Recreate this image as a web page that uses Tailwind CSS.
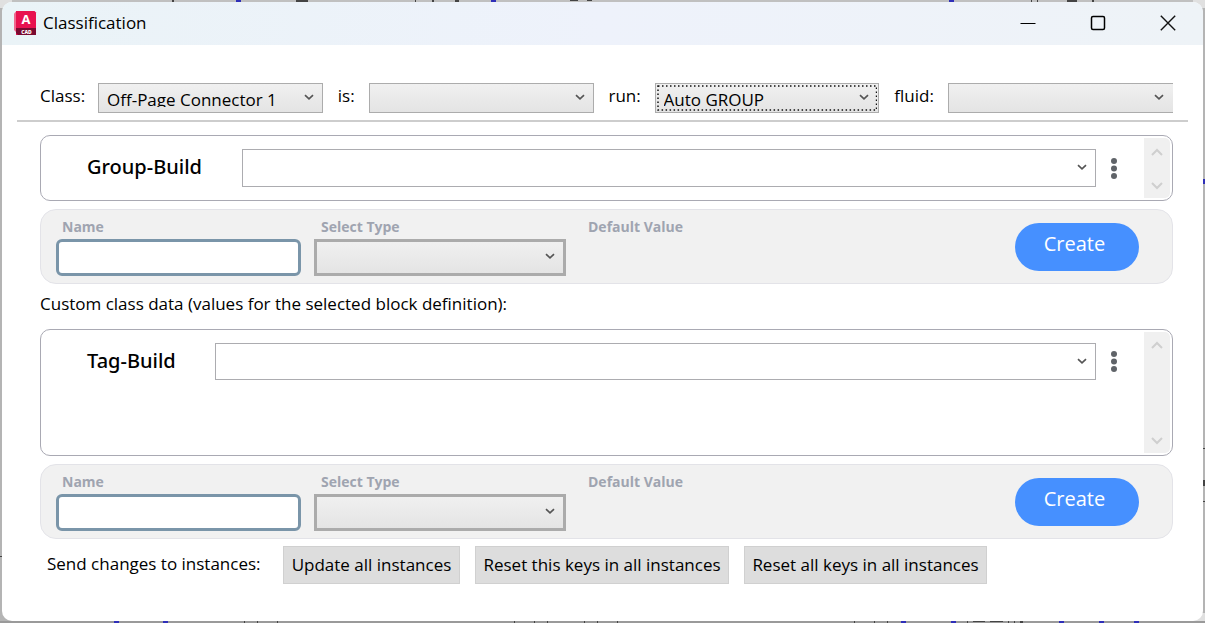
<!DOCTYPE html>
<html lang="en">
<head>
<meta charset="utf-8">
<meta name="viewport" content="width=device-width, initial-scale=1">
<title>Classification</title>
<script src="https://cdn.jsdelivr.net/npm/@tailwindcss/browser@4"></script>
</head>
<body class="relative min-h-screen flex flex-col bg-[#b4b4b4] p-[2px] text-[17px] leading-6 text-black font-['Open_Sans','Noto_Sans',sans-serif]">

<!-- canvas behind the dialog -->
<svg class="absolute inset-0 w-full h-full" aria-hidden="true">
  <path d="M0 0h1205v2H0z" fill="#c0c0c0"/><path d="M0 0h12v8H0zM1193 0h12v8h-12zM1193 613h12v10h-12z" fill="#e0e0e0"/>
  <path d="M0 621h1205v2H0z" fill="#9a9a9a"/>
  <path d="M236 0h5v2h-5zM491 0h5v2h-5zM949 0h5v2h-5zM1202 179h3v5h-3zM114 621h5v2h-5zM163 621h5v2h-5zM901 621h5v2h-5zM951 621h5v2h-5zM1059 621h5v2h-5zM1099 621h5v2h-5zM1134 621h5v2h-5z" fill="#2f2fb8"/>
  <path d="M296 0h12v2h-12zM1067 0h10v2h-10zM1092 0h2v2h-2zM1031 0h1v2h-1zM1037 0h1v2h-1zM172 0h2v2h-2zM415 0h1v2h-1zM432 0h2v2h-2zM455 0h4v2h-4zM570 0h8v1h-8zM587 0h5v1h-5zM244 621h1v2h-1zM257 621h1v2h-1zM277 621h1v2h-1zM514 621h1v2h-1zM534 621h1v2h-1zM547 621h1v2h-1zM584 621h1v2h-1zM597 621h1v2h-1zM617 621h1v2h-1zM854 621h1v2h-1zM874 621h1v2h-1zM887 621h1v2h-1zM967 621h1v2h-1zM973 621h12v1h-12zM990 621h13v1h-13zM1008 621h1v2h-1zM1014 621h1v2h-1zM1020 621h3v2h-3zM0 556h2v1h-2zM1203 448h2v1h-2zM1203 480h2v6h-2zM1203 501h2v1h-2z" fill="#444"/>
</svg>

<!-- shared icons -->
<svg class="hidden" aria-hidden="true">
  <symbol id="chevron" viewBox="0 0 10 7"><path d="M1 1.2 5 4.8 9 1.2" fill="none" stroke="#555" stroke-width="1.7"/></symbol>
  <symbol id="up" viewBox="0 0 12 9"><path d="M1 7 6 2 11 7" fill="none" stroke="#cfcfcf" stroke-width="2"/></symbol>
  <symbol id="down" viewBox="0 0 12 9"><path d="M1 2 6 7 11 2" fill="none" stroke="#cfcfcf" stroke-width="2"/></symbol>
  <symbol id="dots" viewBox="0 0 6 22"><g fill="#5f6368"><circle cx="3" cy="3" r="3"/><circle cx="3" cy="10.5" r="3"/><circle cx="3" cy="18" r="3"/></g></symbol>
</svg>

<div class="relative flex-1 flex flex-col rounded-[10px] bg-white overflow-hidden">
  <header class="h-[43px] flex items-center bg-linear-to-r from-[#eaf3f7] via-[#eef2fb] to-[#eef3f7] pl-3 pr-[27px] pb-[2px]">
    <svg class="w-6 h-6 mr-1" viewBox="0 0 24 24" aria-hidden="true">
      <path d="M0 2.5 2.5 0v21.500L0 19z" fill="#f0698f"/>
      <path d="M2 0h18.500L22 1.500V24H2z" fill="#e8114f"/>
      <path d="M2 17h20v7H4l-2-2z" fill="#7a0a30"/>
      <text x="12" y="13" text-anchor="middle" font-size="13" font-weight="700" fill="#fff">A</text>
      <text x="12.500" y="22.500" text-anchor="middle" font-size="5" font-weight="800" fill="#fff">CAD</text>
    </svg>
    <h1 class="flex-1 pl-px">Classification</h1>
    <div class="flex items-center gap-[54px]">
      <button aria-label="Minimize"><svg class="block w-4 h-4" viewBox="0 0 16 16"><path d="M.5 8.500h15" stroke="#000" stroke-width="1.200"/></svg></button>
      <button aria-label="Maximize"><svg class="block w-4 h-4" viewBox="0 0 16 16"><rect x="1.500" y="1.500" width="13" height="13" rx="1.500" fill="none" stroke="#000" stroke-width="1.500"/></svg></button>
      <button aria-label="Close"><svg class="block w-4 h-4" viewBox="0 0 16 16"><path d="m.8.8 14.400 14.400M15.200.8.8 15.200" stroke="#111" stroke-width="1.400"/></svg></button>
    </div>
  </header>

  <main class="flex-1 flex flex-col pl-[38px] pr-[30px] pt-[38px]">
    <div class="-ml-[23px] -mr-[15px] pl-[23px] pr-[15px] pb-[7px] flex items-center border-b-2 border-[#cdcdcd]">
      <label for="class" class="w-[58px] pb-1">Class:</label>
      <div class="relative flex-1">
        <select id="class" class="block appearance-none w-full h-[30px] border border-[#acacac] bg-linear-to-b from-[#f0f0f0] to-[#e4e4e4] pl-2 pt-2 pb-[5px] leading-[15px]"><option>Off-Page Connector 1</option></select>
        <svg class="absolute right-[9px] top-[11px] w-[10px] h-[7px] pointer-events-none"><use href="#chevron"/></svg>
      </div>
      <label for="is" class="w-[46px] pl-[15px] pb-1">is:</label>
      <div class="relative flex-1">
        <select id="is" class="block appearance-none w-full h-[30px] border border-[#acacac] bg-linear-to-b from-[#f0f0f0] to-[#e4e4e4] pl-2"><option></option></select>
        <svg class="absolute right-[9px] top-[11px] w-[10px] h-[7px] pointer-events-none"><use href="#chevron"/></svg>
      </div>
      <label for="run" class="w-[61px] pl-[15px] pb-1">run:</label>
      <div class="relative flex-1">
        <select id="run" class="block appearance-none w-full h-[30px] border border-[#acacac] bg-linear-to-b from-[#f0f0f0] to-[#e4e4e4] pl-2 pt-2 pb-[5px] leading-[15px]"><option>Auto GROUP</option></select>
        <svg class="absolute inset-[2px] w-[calc(100%-4px)] h-[26px] pointer-events-none" aria-hidden="true"><rect x="1" y="1" width="99%" height="24" fill="none" stroke="#111" stroke-width="1.500" stroke-dasharray="1.500 2.500"/></svg>
        <svg class="absolute right-[10px] top-[11px] w-[10px] h-[7px] pointer-events-none"><use href="#chevron"/></svg>
      </div>
      <label for="fluid" class="w-[69px] pl-[15px] pb-1">fluid:</label>
      <div class="relative flex-1">
        <select id="fluid" class="block appearance-none w-full h-[30px] border border-r-0 border-[#acacac] bg-linear-to-b from-[#f0f0f0] to-[#e4e4e4] pl-2"><option></option></select>
        <svg class="absolute right-[9px] top-[11px] w-[10px] h-[7px] pointer-events-none"><use href="#chevron"/></svg>
      </div>
    </div>

    <section class="mt-[13px] h-[66px] flex rounded-[10px] border border-[#a9a9b3] p-[2px]">
      <div class="flex-1 flex items-start pl-11 pt-[11px]">
        <label for="group" class="w-[155px] pt-[6px] text-[20px] font-medium font-['Noto_Sans','Open_Sans',sans-serif]">Group-Build</label>
        <div class="relative flex-1">
          <select id="group" class="block appearance-none w-full h-[38px] border border-[#acacb0] bg-white pl-2"><option></option></select>
          <svg class="absolute right-[9px] top-[15px] w-[10px] h-[7px] pointer-events-none"><use href="#chevron"/></svg>
        </div>
        <button aria-label="Group-Build options" class="ml-[15px] mr-[27px] pt-[9px]"><svg class="block w-[6px] h-[22px]"><use href="#dots"/></svg></button>
      </div>
      <div class="w-[26px] flex flex-col items-center justify-between bg-[#f0f0f0] pt-[10px] pb-2 rounded-r-[5px]">
        <button aria-label="Scroll up"><svg class="block w-3 h-[9px]"><use href="#up"/></svg></button>
        <button aria-label="Scroll down"><svg class="block w-3 h-[9px]"><use href="#down"/></svg></button>
      </div>
    </section>

    <form class="mt-2 h-[75px] flex items-start rounded-[16px] border border-[#e3e3e8] bg-[#f1f1f1] pl-[15px] pr-[33px]">
      <div class="w-[245px] mr-[13px]">
        <label for="n1" class="block h-[29px] pl-[6px] pt-[5px] text-[14px] font-bold text-[#9fa4b0]">Name</label>
        <input id="n1" type="text" class="block w-full h-[37px] rounded-[6px] border-3 border-[#7a95a9] bg-white px-2">
      </div>
      <div class="w-[252px] mr-[22px]">
        <label for="t1" class="block h-[29px] pl-[7px] pt-[5px] text-[14px] font-bold text-[#9fa4b0]">Select Type</label>
        <div class="relative">
          <select id="t1" class="block appearance-none w-full h-[37px] border-3 border-[#ababab] bg-linear-to-b from-[#f0f0f0] to-[#e4e4e4] pl-2"><option></option></select>
          <svg class="absolute right-[11px] top-[14px] w-[10px] h-[7px] pointer-events-none"><use href="#chevron"/></svg>
        </div>
      </div>
      <span class="flex-1 pt-[5px] text-[14px] font-bold text-[#9fa4b0]">Default Value</span>
      <button type="button" class="mt-[13px] w-[124px] h-12 rounded-full bg-[#4690ff] pr-[5px] pb-[6px] text-[20px] text-white">Create</button>
    </form>

    <h2 class="mt-2">Custom class data (values for the selected block definition):</h2>

    <section class="mt-[13px] h-[127px] flex rounded-[10px] border border-[#a9a9b3] p-[2px]">
      <div class="flex-1 flex items-start pl-11 pt-[11px]">
        <label for="tag" class="w-[128px] pt-[6px] text-[20px] font-medium font-['Noto_Sans','Open_Sans',sans-serif]">Tag-Build</label>
        <div class="relative flex-1">
          <select id="tag" class="block appearance-none w-full h-[37px] border border-[#acacb0] bg-white pl-2"><option></option></select>
          <svg class="absolute right-[9px] top-[15px] w-[10px] h-[7px] pointer-events-none"><use href="#chevron"/></svg>
        </div>
        <button aria-label="Tag-Build options" class="ml-[15px] mr-[27px] pt-2"><svg class="block w-[6px] h-[22px]"><use href="#dots"/></svg></button>
      </div>
      <div class="w-[26px] flex flex-col items-center justify-between bg-[#f0f0f0] pt-[9px] pb-2 rounded-r-[5px]">
        <button aria-label="Scroll up"><svg class="block w-3 h-[9px]"><use href="#up"/></svg></button>
        <button aria-label="Scroll down"><svg class="block w-3 h-[9px]"><use href="#down"/></svg></button>
      </div>
    </section>

    <form class="mt-2 h-[75px] flex items-start rounded-[16px] border border-[#e3e3e8] bg-[#f1f1f1] pl-[15px] pr-[33px]">
      <div class="w-[245px] mr-[13px]">
        <label for="n2" class="block h-[29px] pl-[6px] pt-[5px] text-[14px] font-bold text-[#9fa4b0]">Name</label>
        <input id="n2" type="text" class="block w-full h-[37px] rounded-[6px] border-3 border-[#7a95a9] bg-white px-2">
      </div>
      <div class="w-[252px] mr-[22px]">
        <label for="t2" class="block h-[29px] pl-[7px] pt-[5px] text-[14px] font-bold text-[#9fa4b0]">Select Type</label>
        <div class="relative">
          <select id="t2" class="block appearance-none w-full h-[37px] border-3 border-[#ababab] bg-linear-to-b from-[#f0f0f0] to-[#e4e4e4] pl-2"><option></option></select>
          <svg class="absolute right-[11px] top-[14px] w-[10px] h-[7px] pointer-events-none"><use href="#chevron"/></svg>
        </div>
      </div>
      <span class="flex-1 pt-[5px] text-[14px] font-bold text-[#9fa4b0]">Default Value</span>
      <button type="button" class="mt-[13px] w-[124px] h-12 rounded-full bg-[#4690ff] pr-[5px] pb-[6px] text-[20px] text-white">Create</button>
    </form>

    <footer class="mt-[7px] flex items-center gap-[15px] pl-[7px]">
      <span class="w-[221px] pb-[2px]">Send changes to instances:</span>
      <button class="w-[177px] h-[38px] border border-[#d0d0d0] bg-[#dddddd] whitespace-nowrap">Update all instances</button>
      <button class="w-[254px] h-[38px] border border-[#d0d0d0] bg-[#dddddd] whitespace-nowrap">Reset this keys in all instances</button>
      <button class="w-[243px] h-[38px] border border-[#d0d0d0] bg-[#dddddd] whitespace-nowrap">Reset all keys in all instances</button>
    </footer>
  </main>
</div>
</body>
</html>
